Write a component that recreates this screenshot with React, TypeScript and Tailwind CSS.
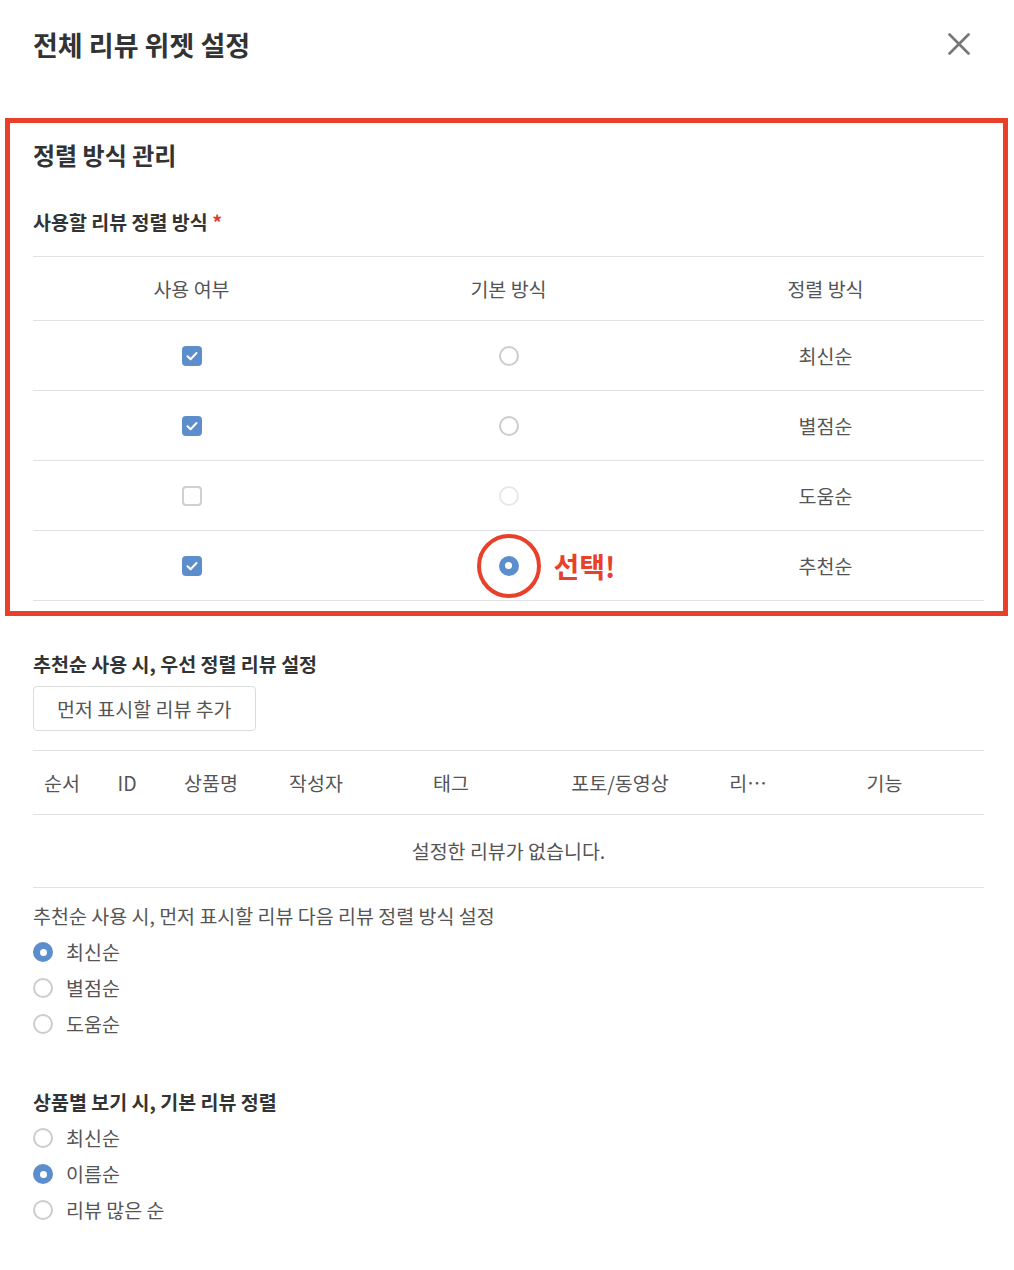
import { useState } from "react";

const sortRows = [
  { label: "최신순", used: true, radio: "off" },
  { label: "별점순", used: true, radio: "off" },
  { label: "도움순", used: false, radio: "disabled" },
  { label: "추천순", used: true, radio: "on" },
] as const;

const reviewCols = ["순서", "ID", "상품명", "작성자", "태그", "포토/동영상", "리…", "기능"];

function Checkbox({ checked }: { checked: boolean }) {
  if (!checked) {
    return <span className="block h-[20px] w-[20px] rounded-[4px] border-2 border-[#d0d0d0] bg-white" />;
  }
  return (
    <span className="flex h-[20px] w-[20px] items-center justify-center rounded-[4px] bg-[#5c8dcc]">
      <svg width="20" height="20" viewBox="0 0 20 20" fill="none" stroke="white" strokeWidth="2" strokeLinecap="round" strokeLinejoin="round">
        <polyline points="5.5 10.2 8.6 13.2 14.5 7" />
      </svg>
    </span>
  );
}

function Radio({ state }: { state: "on" | "off" | "disabled" }) {
  if (state === "on") {
    return (
      <span className="flex h-[20px] w-[20px] items-center justify-center rounded-full bg-[#5c8dcc]">
        <span className="h-[7px] w-[7px] rounded-full bg-white" />
      </span>
    );
  }
  return (
    <span
      className={`block h-[20px] w-[20px] rounded-full border-2 bg-white ${
        state === "disabled" ? "border-[#e8e8e8]" : "border-[#cccccc]"
      }`}
    />
  );
}

function RadioGroup({ options, initial }: { options: string[]; initial: number }) {
  const [value, setValue] = useState(initial);
  return (
    <div>
      {options.map((opt, i) => (
        <label key={opt} onClick={() => setValue(i)} className="flex h-[36px] cursor-pointer items-center gap-[13px]">
          <Radio state={value === i ? "on" : "off"} />
          <span className="text-[19.5px] text-[#555]">{opt}</span>
        </label>
      ))}
    </div>
  );
}

export default function App() {
  return (
    <div className="min-h-screen bg-white px-[33px] pr-[30px] font-['Noto_Sans_CJK_KR','Noto_Sans',sans-serif] text-[#555]">
      {/* Header */}
      <div className="flex h-[88px] items-center justify-between">
        <h1 className="text-[27px] font-bold leading-none text-[#333]">전체 리뷰 위젯 설정</h1>
        <button type="button" className="mr-[14px] flex h-[22px] w-[22px] items-center justify-center text-[#777]">
          <svg width="22" height="22" viewBox="0 0 22 22" fill="none" stroke="currentColor" strokeWidth="2.6" strokeLinecap="round">
            <path d="M1.5 1.5l19 19M20.5 1.5l-19 19" />
          </svg>
        </button>
      </div>

      {/* Sort method section */}
      <div className="relative mt-[30px] pt-[22px] pb-[15px]">
        <div className="pointer-events-none absolute -left-[28px] -right-[24px] top-0 bottom-0 border-[5px] border-[#e8402a]" />
        <h2 className="h-[30px] text-[24px] font-bold leading-[30px] text-[#333]">정렬 방식 관리</h2>
        <h3 className="mt-[39px] h-[26px] text-[19.5px] font-bold leading-[26px] text-[#333]">
          사용할 리뷰 정렬 방식 <span className="text-[#e03a2e]">*</span>
        </h3>
        <div className="mt-[21px] border-t border-[#e2e2e2]">
          <div className="grid h-[64px] grid-cols-3 items-center border-b border-[#e2e2e2] text-center text-[19.5px] text-[#555]">
            <span>사용 여부</span>
            <span>기본 방식</span>
            <span>정렬 방식</span>
          </div>
          {sortRows.map((row) => (
            <div key={row.label} className="grid h-[70px] grid-cols-3 items-center border-b border-[#e2e2e2] text-[19.5px] text-[#555]">
              <div className="flex justify-center">
                <Checkbox checked={row.used} />
              </div>
              <div className="relative flex justify-center">
                <Radio state={row.radio} />
                {row.radio === "on" && (
                  <>
                    <span className="pointer-events-none absolute left-1/2 top-1/2 h-[64px] w-[64px] -translate-x-1/2 -translate-y-1/2 rounded-full border-4 border-[#e8402a]" />
                    <span className="absolute left-[calc(50%+45px)] top-1/2 -translate-y-1/2 text-[28px] font-bold leading-none text-[#e8402a]">
                      선택!
                    </span>
                  </>
                )}
              </div>
              <div className="text-center">{row.label}</div>
            </div>
          ))}
        </div>
      </div>

      {/* Pinned reviews */}
      <h3 className="mt-[35px] h-[26px] text-[19.5px] font-bold leading-[26px] text-[#333]">추천순 사용 시, 우선 정렬 리뷰 설정</h3>
      <button
        type="button"
        className="mt-[9px] h-[45px] rounded-[4px] border border-[#dcdcdc] bg-white px-[23px] text-[19.5px] text-[#555]"
      >
        먼저 표시할 리뷰 추가
      </button>
      <div className="mt-[19px] border-t border-[#e2e2e2]">
        <div className="grid h-[64px] grid-cols-[58px_72px_96px_114px_156px_182px_74px_1fr] items-center border-b border-[#e2e2e2] text-center text-[19.5px] text-[#555]">
          {reviewCols.map((c) => (
            <span key={c} className="truncate">
              {c}
            </span>
          ))}
        </div>
        <div className="flex h-[73px] items-center justify-center border-b border-[#e2e2e2] text-[19.5px] text-[#555]">
          설정한 리뷰가 없습니다.
        </div>
      </div>

      <div className="mt-[10px]">
        <p className="flex h-[36px] items-center text-[19.5px] text-[#555]">추천순 사용 시, 먼저 표시할 리뷰 다음 리뷰 정렬 방식 설정</p>
        <RadioGroup options={["최신순", "별점순", "도움순"]} initial={0} />
      </div>

      <div className="mt-[42px] pb-[40px]">
        <h3 className="flex h-[36px] items-center text-[19.5px] font-bold text-[#333]">상품별 보기 시, 기본 리뷰 정렬</h3>
        <RadioGroup options={["최신순", "이름순", "리뷰 많은 순"]} initial={1} />
      </div>
    </div>
  );
}
